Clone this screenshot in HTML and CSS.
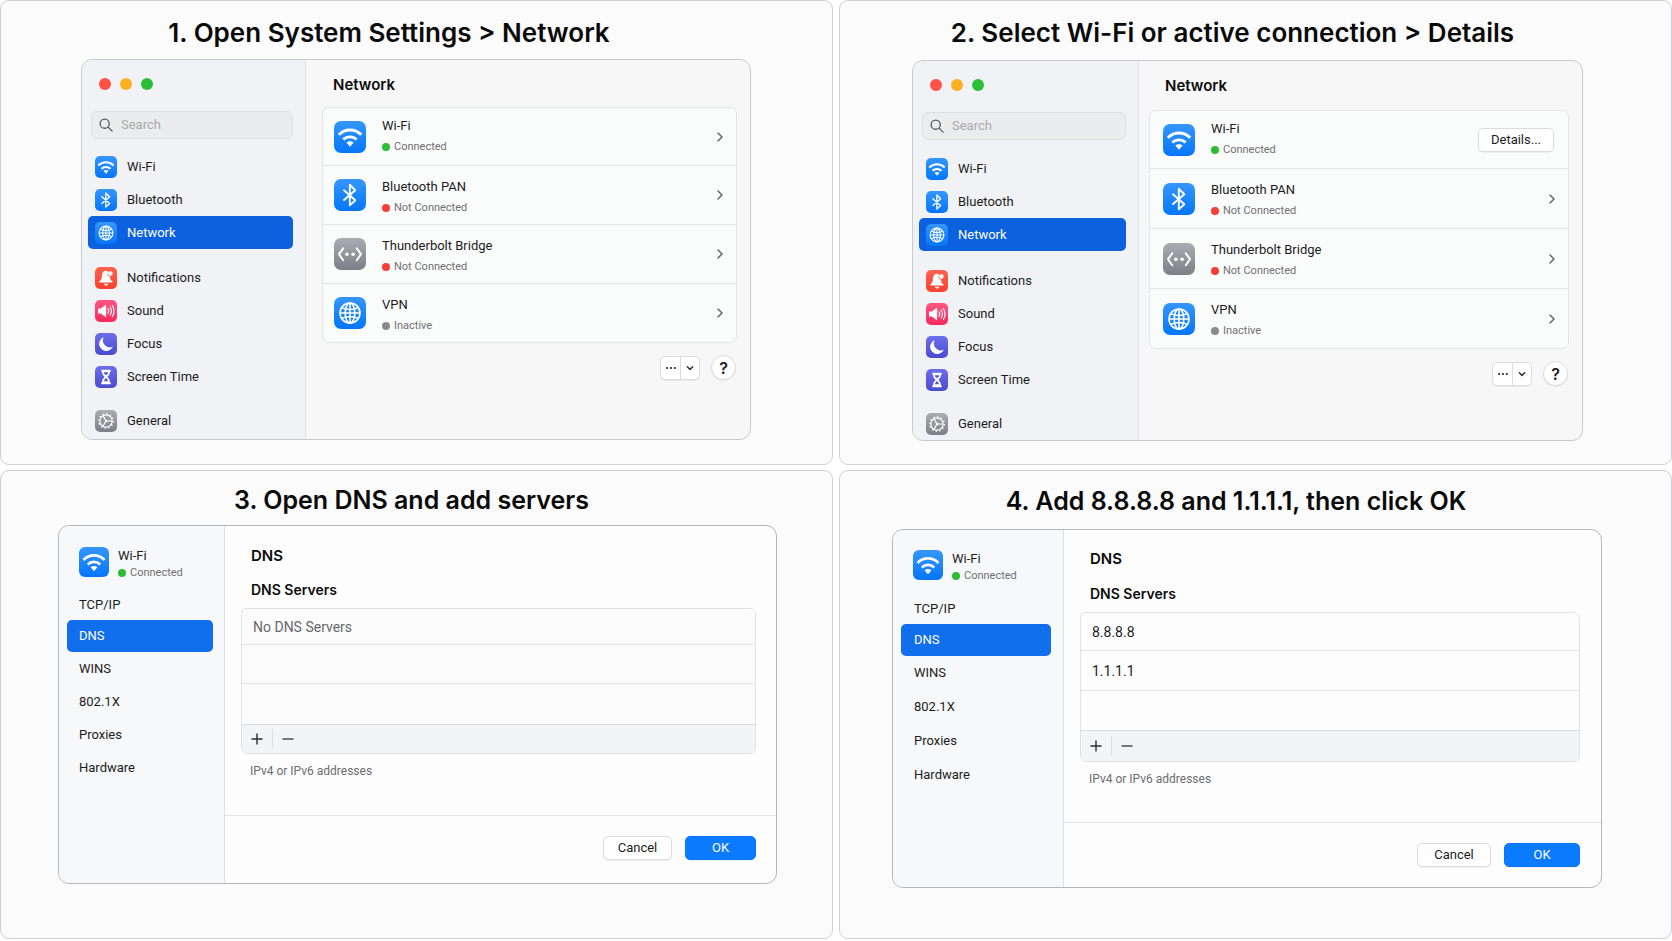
FILE: index.html
```html
<!DOCTYPE html>
<html lang="en">
<head>
<meta charset="utf-8">
<meta name="viewport" content="width=device-width, initial-scale=1">
<title>Change DNS servers on a Mac</title>
<link rel="stylesheet" href="styles.css">
</head>
<body>
<svg class="sprite" aria-hidden="true">
  <symbol id="wifi" viewBox="0 0 32 32"><g fill="none" stroke="#fff" stroke-width="2.9"><path d="M4.8 13.8C11 7.3 21 7.3 27.2 13.8"/><path d="M9.4 18.6C13 14.9 19 14.9 22.6 18.6"/></g><path fill="#fff" d="M12.4 21.6C14.4 19.8 17.6 19.8 19.6 21.6L16 25.8Z"/></symbol>
  <symbol id="bluetooth" viewBox="0 0 32 32"><path fill="none" stroke="#fff" stroke-width="1.9" stroke-linejoin="round" stroke-linecap="round" d="M10 11.3 21.3 21.2 15.8 26.4V5.8L21.3 11.2 10 21"/></symbol>
  <symbol id="bridge" viewBox="0 0 32 32"><g fill="none" stroke="#fff" stroke-width="2" stroke-linecap="round" stroke-linejoin="round"><path d="M9.2 10.4 5 16.2l4.2 6"/><path d="M22.8 10.4 27 16.2l-4.2 6"/></g><circle cx="12.9" cy="16.2" r="1.8" fill="#fff"/><circle cx="19.1" cy="16.2" r="1.8" fill="#fff"/></symbol>
  <symbol id="globe" viewBox="0 0 32 32"><g fill="none" stroke="#fff" stroke-width="1.6"><circle cx="16" cy="16" r="10"/><ellipse cx="16" cy="16" rx="4.8" ry="10"/><path d="M16 6v20M6 16h20M7.8 10.6C12.6 13 19.4 13 24.2 10.6M7.8 21.4C12.6 19 19.4 19 24.2 21.4"/></g></symbol>
  <symbol id="bell" viewBox="0 0 32 32"><path fill="#fff" d="M16 5.5c1.6 0 2.5.6 3 1.7a4.4 4.4 0 0 0 2.9 6.9c.2 3.4.9 5 3.4 6.8.9.7.5 1.6-.5 1.6H7c-1 0-1.4-.9-.5-1.6 2.6-1.9 3.2-3.6 3.5-7.4.3-4.8 2-8 6-8ZM13 24.2h6.400c-.4 1.7-1.6 2.6-3.2 2.6s-2.8-.9-3.2-2.6Z"/><circle cx="22.3" cy="9.6" r="3.4" fill="#fff"/></symbol>
  <symbol id="sound" viewBox="0 0 32 32"><path fill="#fff" d="M4.5 12.5h4.2l6-5c.8-.6 1.6-.3 1.6.8v15.400c0 1.100-.8 1.400-1.600.8l-6-5H4.500Z"/><g fill="none" stroke="#fff" stroke-width="1.7" stroke-linecap="round"><path d="M19 12.8c1.2 2 1.2 4.4 0 6.4M22 10.2c2.2 3.5 2.2 8.100 0 11.600M25.200 8c3.200 5 3.200 11 0 16"/></g></symbol>
  <symbol id="moon" viewBox="0 0 32 32"><path fill="#fff" d="M12.8 6.2A10.300 10.300 0 1 0 26 19.600 9.800 9.800 0 0 1 12.800 6.200Z"/></symbol>
  <symbol id="hourglass" viewBox="0 0 32 32"><path fill="#fff" d="M9.2 5.5h13.600v3h-1.200c0 3.400-1 5.200-3.600 7.500 2.600 2.300 3.600 4.100 3.600 7.500h1.200v3H9.200v-3h1.200c0-3.400 1-5.200 3.600-7.500-2.600-2.300-3.600-4.100-3.600-7.500H9.200Z"/><path fill="#5656d8" d="M13 9h6c0 1.500-.7 2.600-1.700 3.600h-2.600C13.700 11.600 13 10.500 13 9ZM16 17.500c1.600 1.600 2.600 2.800 3 4.600h-6c.4-1.800 1.400-3 3-4.600Z"/></symbol>
  <symbol id="gear" viewBox="0 0 32 32"><g fill="none" stroke="#fff"><circle cx="16" cy="16" r="9" stroke-width="1.7"/><circle cx="16" cy="16" r="10.6" stroke-width="2" stroke-dasharray="1.9 3.65"/><path stroke-width="1.6" d="M16 16 11.500 8.200M16 16h9M16 16l-4.500 7.800"/></g><circle cx="16" cy="16" r="2" fill="#fff"/></symbol>
  <symbol id="search" viewBox="0 0 16 16"><g fill="none" stroke="#58585c" stroke-width="1.5" stroke-linecap="round"><circle cx="6.5" cy="6.5" r="5.2"/><path d="M10.400 10.400 15 15"/></g></symbol>
  <symbol id="chevron" viewBox="0 0 16 16"><path fill="none" stroke="#66666a" stroke-width="1.5" stroke-linecap="round" stroke-linejoin="round" d="M6 4l4 4-4 4"/></symbol>
  <symbol id="down" viewBox="0 0 16 16"><path fill="none" stroke="#333" stroke-width="1.5" stroke-linecap="round" stroke-linejoin="round" d="M5.300 6.800 8 9.400l2.700-2.600"/></symbol>
  <symbol id="dots" viewBox="0 0 16 16"><g fill="#222"><circle cx="4.2" cy="8" r="1.1"/><circle cx="8" cy="8" r="1.1"/><circle cx="11.8" cy="8" r="1.1"/></g></symbol>
  <symbol id="plus" viewBox="0 0 16 16"><path fill="none" stroke="#2c2c2e" stroke-width="1.4" d="M2.500 8h11M8 2.500v11"/></symbol>
  <symbol id="minus" viewBox="0 0 16 16"><path fill="none" stroke="#4c4c4e" stroke-width="1.4" d="M2.500 8h11"/></symbol>
</svg>

<main class="steps">
  <section class="step step-open">
    <h1 class="step-title">1. Open System Settings &gt; Network</h1>
    <div class="window settings">
      <aside class="sidebar">
        <div class="lights"><span class="light red"></span><span class="light amber"></span><span class="light green"></span></div>
        <label class="search"><svg class="search-icon" aria-hidden="true"><use href="#search"/></svg><input type="search" placeholder="Search" aria-label="Search"></label>
        <nav class="menu" aria-label="Settings">
          <a class="item" href="#wifi-pane"><svg class="tile blue"><use href="#wifi"/></svg>Wi-Fi</a>
          <a class="item" href="#bluetooth-pane"><svg class="tile blue"><use href="#bluetooth"/></svg>Bluetooth</a>
          <a class="item selected" aria-current="page" href="#network-pane"><svg class="tile blue"><use href="#globe"/></svg>Network</a>
          <a class="item group" href="#notifications-pane"><svg class="tile orange"><use href="#bell"/></svg>Notifications</a>
          <a class="item" href="#sound-pane"><svg class="tile pink"><use href="#sound"/></svg>Sound</a>
          <a class="item" href="#focus-pane"><svg class="tile indigo"><use href="#moon"/></svg>Focus</a>
          <a class="item" href="#screen-time-pane"><svg class="tile indigo"><use href="#hourglass"/></svg>Screen Time</a>
          <a class="item group-last" href="#general-pane"><svg class="tile gray"><use href="#gear"/></svg>General</a>
        </nav>
      </aside>
      <div class="content">
        <h2 class="pane-title">Network</h2>
        <ul class="services">
          <li class="service"><svg class="tile blue"><use href="#wifi"/></svg><div class="service-text"><span class="name">Wi-Fi</span><span class="status on">Connected</span></div><button class="go" type="button" aria-label="Open Wi-Fi"><svg><use href="#chevron"/></svg></button></li>
          <li class="service"><svg class="tile blue"><use href="#bluetooth"/></svg><div class="service-text"><span class="name">Bluetooth PAN</span><span class="status off">Not Connected</span></div><button class="go" type="button" aria-label="Open Bluetooth PAN"><svg><use href="#chevron"/></svg></button></li>
          <li class="service"><svg class="tile gray"><use href="#bridge"/></svg><div class="service-text"><span class="name">Thunderbolt Bridge</span><span class="status off">Not Connected</span></div><button class="go" type="button" aria-label="Open Thunderbolt Bridge"><svg><use href="#chevron"/></svg></button></li>
          <li class="service"><svg class="tile blue"><use href="#globe"/></svg><div class="service-text"><span class="name">VPN</span><span class="status idle">Inactive</span></div><button class="go" type="button" aria-label="Open VPN"><svg><use href="#chevron"/></svg></button></li>
        </ul>
        <div class="tools">
          <div class="split"><button type="button" aria-label="More actions"><svg><use href="#dots"/></svg></button><button type="button" aria-label="Show menu"><svg><use href="#down"/></svg></button></div>
          <button class="help" type="button" aria-label="Help">?</button>
        </div>
      </div>
    </div>
  </section>

  <section class="step step-select">
    <h1 class="step-title">2. Select Wi-Fi or active connection &gt; Details</h1>
    <div class="window settings">
      <aside class="sidebar">
        <div class="lights"><span class="light red"></span><span class="light amber"></span><span class="light green"></span></div>
        <label class="search"><svg class="search-icon" aria-hidden="true"><use href="#search"/></svg><input type="search" placeholder="Search" aria-label="Search"></label>
        <nav class="menu" aria-label="Settings">
          <a class="item" href="#wifi-pane"><svg class="tile blue"><use href="#wifi"/></svg>Wi-Fi</a>
          <a class="item" href="#bluetooth-pane"><svg class="tile blue"><use href="#bluetooth"/></svg>Bluetooth</a>
          <a class="item selected" aria-current="page" href="#network-pane"><svg class="tile blue"><use href="#globe"/></svg>Network</a>
          <a class="item group" href="#notifications-pane"><svg class="tile orange"><use href="#bell"/></svg>Notifications</a>
          <a class="item" href="#sound-pane"><svg class="tile pink"><use href="#sound"/></svg>Sound</a>
          <a class="item" href="#focus-pane"><svg class="tile indigo"><use href="#moon"/></svg>Focus</a>
          <a class="item" href="#screen-time-pane"><svg class="tile indigo"><use href="#hourglass"/></svg>Screen Time</a>
          <a class="item group-last" href="#general-pane"><svg class="tile gray"><use href="#gear"/></svg>General</a>
        </nav>
      </aside>
      <div class="content">
        <h2 class="pane-title">Network</h2>
        <ul class="services">
          <li class="service"><svg class="tile blue"><use href="#wifi"/></svg><div class="service-text"><span class="name">Wi-Fi</span><span class="status on">Connected</span></div><button class="button details" type="button">Details...</button></li>
          <li class="service"><svg class="tile blue"><use href="#bluetooth"/></svg><div class="service-text"><span class="name">Bluetooth PAN</span><span class="status off">Not Connected</span></div><button class="go" type="button" aria-label="Open Bluetooth PAN"><svg><use href="#chevron"/></svg></button></li>
          <li class="service"><svg class="tile gray"><use href="#bridge"/></svg><div class="service-text"><span class="name">Thunderbolt Bridge</span><span class="status off">Not Connected</span></div><button class="go" type="button" aria-label="Open Thunderbolt Bridge"><svg><use href="#chevron"/></svg></button></li>
          <li class="service"><svg class="tile blue"><use href="#globe"/></svg><div class="service-text"><span class="name">VPN</span><span class="status idle">Inactive</span></div><button class="go" type="button" aria-label="Open VPN"><svg><use href="#chevron"/></svg></button></li>
        </ul>
        <div class="tools">
          <div class="split"><button type="button" aria-label="More actions"><svg><use href="#dots"/></svg></button><button type="button" aria-label="Show menu"><svg><use href="#down"/></svg></button></div>
          <button class="help" type="button" aria-label="Help">?</button>
        </div>
      </div>
    </div>
  </section>

  <section class="step step-dns">
    <h1 class="step-title">3. Open DNS and add servers</h1>
    <div class="window dialog">
      <aside class="tabs">
        <div class="network"><svg class="tile blue"><use href="#wifi"/></svg><div class="service-text"><span class="name">Wi-Fi</span><span class="status on">Connected</span></div></div>
        <nav class="tab-list" aria-label="Wi-Fi details">
          <a class="tab" href="#tcp-ip">TCP/IP</a>
          <a class="tab selected" aria-current="page" href="#dns">DNS</a>
          <a class="tab" href="#wins">WINS</a>
          <a class="tab" href="#dot1x">802.1X</a>
          <a class="tab" href="#proxies">Proxies</a>
          <a class="tab" href="#hardware">Hardware</a>
        </nav>
      </aside>
      <div class="detail">
        <div class="detail-body">
          <h2 class="pane-title">DNS</h2>
          <h3 class="list-title">DNS Servers</h3>
          <div class="server-box">
            <ul class="servers"><li class="empty">No DNS Servers</li><li></li><li></li></ul>
            <div class="edit"><button type="button" aria-label="Add server"><svg><use href="#plus"/></svg></button><button type="button" aria-label="Remove server"><svg><use href="#minus"/></svg></button></div>
          </div>
          <p class="note">IPv4 or IPv6 addresses</p>
        </div>
        <div class="actions"><button class="button" type="button">Cancel</button><button class="button primary" type="button">OK</button></div>
      </div>
    </div>
  </section>

  <section class="step step-add">
    <h1 class="step-title">4. Add 8.8.8.8 and 1.1.1.1, then click OK</h1>
    <div class="window dialog">
      <aside class="tabs">
        <div class="network"><svg class="tile blue"><use href="#wifi"/></svg><div class="service-text"><span class="name">Wi-Fi</span><span class="status on">Connected</span></div></div>
        <nav class="tab-list" aria-label="Wi-Fi details">
          <a class="tab" href="#tcp-ip">TCP/IP</a>
          <a class="tab selected" aria-current="page" href="#dns">DNS</a>
          <a class="tab" href="#wins">WINS</a>
          <a class="tab" href="#dot1x">802.1X</a>
          <a class="tab" href="#proxies">Proxies</a>
          <a class="tab" href="#hardware">Hardware</a>
        </nav>
      </aside>
      <div class="detail">
        <div class="detail-body">
          <h2 class="pane-title">DNS</h2>
          <h3 class="list-title">DNS Servers</h3>
          <div class="server-box">
            <ul class="servers"><li>8.8.8.8</li><li>1.1.1.1</li><li></li></ul>
            <div class="edit"><button type="button" aria-label="Add server"><svg><use href="#plus"/></svg></button><button type="button" aria-label="Remove server"><svg><use href="#minus"/></svg></button></div>
          </div>
          <p class="note">IPv4 or IPv6 addresses</p>
        </div>
        <div class="actions"><button class="button" type="button">Cancel</button><button class="button primary" type="button">OK</button></div>
      </div>
    </div>
  </section>
</main>
</body>
</html>
```
FILE: styles.css
```css
*, *::before, *::after { box-sizing: border-box; }

body {
  margin: 0;
  background: #fff;
  color: #1c1c1e;
  font: 400 13px/20px Roboto, "Liberation Sans", sans-serif;
}

h1, h2, h3, p, ul { margin: 0; padding: 0; }
h1, h2, h3, .help { font-family: Inter, "Liberation Sans", sans-serif; }
ul { list-style: none; }
a { color: inherit; text-decoration: none; }
button, input { font: inherit; color: inherit; }
button { padding: 0; cursor: pointer; }
svg { display: block; flex: none; }
.sprite { position: absolute; width: 0; height: 0; }

.steps {
  display: grid;
  grid-template-columns: 1fr 1fr;
  grid-template-rows: auto 1fr;
  gap: 5px 6px;
  min-height: 100vh;
  padding-bottom: 2px;
}

.step {
  display: flex;
  flex-direction: column;
  border: 1px solid #d0d0d2;
  border-radius: 9px;
  background: #fbfbfb;
}
.step-open { padding: 14px 81px 24px 80px; }
.step-select { padding: 14px 88px 22px 72px; }
.step-dns { padding: 11px 55px 24px 57px; }
.step-add { padding: 12px 69px 24px 52px; }

.step-title {
  color: #0a0a0a;
  font-size: 26px;
  font-weight: 600;
  line-height: 36px;
  text-align: center;
}
.step-open .step-title { padding: 0 54px 8px 0; }
.step-select .step-title { padding: 0 30px 9px 0; }
.step-dns .step-title { padding: 0 12px 7px 0; font-size: 25px; }
.step-add .step-title { padding: 0 22px 10px 0; font-size: 25px; }

.window {
  display: flex;
  overflow: hidden;
  border: 1px solid #c9cacd;
  border-radius: 11px;
  background: #f7f7f8;
}

.tile { width: 22px; height: 22px; border-radius: 5px; }
.blue { background: linear-gradient(#3696ff, #0576fb); }
.orange { background: linear-gradient(#ff6150, #f9422f); }
.pink { background: linear-gradient(#ff5683, #f62a5c); }
.indigo { background: linear-gradient(#6d6eea, #4a4bcf); }
.gray { background: linear-gradient(#abacb2, #7e7f86); }

/* System Settings window */
.sidebar {
  flex: none;
  width: 224px;
  padding: 18px 12px 2px 6px;
  border-right: 1px solid #e2e2e5;
  background: #f1f2f5;
}
.step-select .sidebar { width: 226px; padding-bottom: 0; }
.lights { display: flex; gap: 9px; padding: 0 11px; }
.light { width: 12px; height: 12px; border-radius: 50%; }
.red { background: #fb5147; }
.amber { background: #fbb022; }
.green { background: #2dbe38; }

.search {
  display: flex;
  align-items: center;
  gap: 8px;
  height: 28px;
  margin: 21px 0 11px 3px;
  padding: 0 7px;
  border: 1px solid #dddee0;
  border-radius: 6px;
  background: #ebecee;
}
.search-icon { width: 14px; height: 14px; }
.search input {
  flex: 1;
  min-width: 0;
  padding: 0;
  border: 0;
  outline: 0;
  background: none;
}
.search input::placeholder { color: #a9a9ad; opacity: 1; }
.step-select .menu { padding-top: 1px; }

.item {
  display: flex;
  align-items: center;
  gap: 10px;
  height: 33px;
  padding: 0 7px;
  border-radius: 5px;
}
.item.selected { background: #0c62de; color: #fff; }
.group { margin-top: 12px; }
.step-select .group { margin-top: 13px; }
.group-last { margin-top: 11px; }

.content { flex: 1; min-width: 0; padding: 15px 13px 0 16px; }
.step-select .content { padding: 15px 13px 0 10px; }
.pane-title {
  color: #0c0c0d;
  font-size: 15px;
  font-weight: 600;
  line-height: 20px;
}
.content .pane-title { padding-left: 11px; }
.step-select .content .pane-title { padding-left: 16px; }

.services {
  margin-top: 12px;
  border: 1px solid #e3e4e6;
  border-radius: 7px;
  background: #fafbfb;
}
.step-select .services { margin-top: 14px; }
.service {
  display: flex;
  align-items: center;
  gap: 16px;
  height: 59px;
  padding: 0 8px 0 11px;
}
.service:first-child { height: 57px; }
.service + .service { border-top: 1px solid #e3e4e6; }
.step-select .service { height: 60px; padding: 0 8px 0 13px; }
.step-select .service:first-child { height: 57px; }
.service .tile { width: 32px; height: 32px; border-radius: 7px; }
.service-text { flex: 1; display: flex; flex-direction: column; min-width: 0; }
.service .service-text { gap: 1px; }
.service + .service .service-text { padding-top: 4px; }
.status {
  display: flex;
  align-items: center;
  gap: 4px;
  color: #707074;
  font-size: 11px;
}
.status::before {
  content: "";
  width: 8px;
  height: 8px;
  border-radius: 50%;
  background: currentColor;
}
.on::before { background: #2cbc36; }
.off::before { background: #f73e36; }
.idle::before { background: #8a8a8e; }
.go { border: 0; background: none; }
.go svg { width: 16px; height: 16px; }

.button {
  height: 24px;
  border: 1px solid #dcdcdf;
  border-radius: 5px;
  background: #fff;
  box-shadow: 0 1px 1px #0000000f;
  line-height: 20px;
}
.details { width: 76px; margin-right: 6px; }

.tools {
  display: flex;
  align-items: center;
  justify-content: flex-end;
  gap: 11px;
  padding: 12px 1px 0 0;
}
.split {
  display: flex;
  height: 24px;
  border: 1px solid #dcdcdf;
  border-radius: 5px;
  background: #fff;
  box-shadow: 0 1px 1px #0000000f;
}
.split button {
  display: grid;
  place-items: center;
  width: 19px;
  border: 0;
  background: none;
}
.split button + button { border-left: 1px solid #dcdcdf; }
.split svg { width: 16px; height: 16px; }
.help {
  width: 25px;
  height: 25px;
  border: 1px solid #dcdcdf;
  border-radius: 50%;
  background: #fff;
  box-shadow: 0 1px 1px #0000000f;
  font-size: 16px;
  font-weight: 600;
}

/* Connection details dialog */
.dialog { border-color: #b5b6b8; background: #fdfdfd; }
.tabs {
  flex: none;
  width: 166px;
  padding: 17px 11px 8px 8px;
  border-right: 1px solid #e0e0e2;
  background: #f7f8f9;
}
.step-add .tabs { width: 171px; padding: 16px 12px 8px 8px; }
.network { display: flex; align-items: center; gap: 9px; padding-left: 12px; }
.network .tile { width: 30px; height: 30px; border-radius: 6px; }
.network .service-text { padding-top: 4px; line-height: 17px; }
.tab-list { padding-top: 9px; }
.step-add .tab-list { padding-top: 10px; }
.tab {
  display: flex;
  align-items: center;
  height: 33px;
  padding: 0 12px;
  border-radius: 5px;
}
.step-add .tab { height: 34px; padding: 0 13px; }
.tabs .tab:first-child { height: 30px; }
.tabs .tab.selected { height: 32px; background: #116fee; color: #fff; }

.detail { flex: 1; min-width: 0; display: flex; flex-direction: column; }
.detail-body { flex: 1; padding: 20px 20px 34px 16px; }
.step-add .detail-body { padding: 19px 21px 33px 16px; }
.dialog .pane-title, .list-title { padding-left: 10px; }
.list-title {
  margin-top: 14px;
  color: #0c0c0d;
  font-size: 14px;
  font-weight: 600;
  line-height: 20px;
}
.step-add .list-title { margin-top: 15px; }
.server-box {
  overflow: hidden;
  margin-top: 8px;
  border: 1px solid #e1e2e4;
  border-radius: 6px;
  background: #fbfbfb;
}
.step-add .server-box { background: #fdfdfd; }
.servers { font-size: 14px; }
.servers li {
  display: flex;
  align-items: center;
  height: 39px;
  padding: 0 11px;
  border-bottom: 1px solid #e3e4e6;
}
.servers li:first-child { height: 36px; }
.servers li:last-child { height: 41px; border-color: #d9dadc; }
.step-add .servers li { height: 40px; }
.step-add .servers li:first-child { height: 38px; }
.servers .empty { color: #68686c; }
.edit { display: flex; padding: 4px 0; background: #f3f4f5; }
.step-add .edit { padding: 5px 0; }
.edit button {
  display: grid;
  place-items: center;
  width: 30px;
  height: 20px;
  border: 0;
  background: none;
}
.edit button + button { border-left: 1px solid #dfe0e2; }
.edit svg { width: 16px; height: 16px; }
.note { padding: 7px 9px 0; color: #6c6c70; font-size: 12px; }

.actions {
  display: flex;
  justify-content: flex-end;
  gap: 13px;
  padding: 20px 20px 23px;
  border-top: 1px solid #e3e4e6;
}
.step-add .actions { padding: 20px 21px 20px; }
.actions .button { width: 69px; }
.actions .primary { width: 71px; }
.step-add .actions .button { width: 74px; }
.step-add .actions .primary { width: 76px; }
.button.primary { border-color: #0a78f8; background: #0a7bff; color: #fff; }
```
